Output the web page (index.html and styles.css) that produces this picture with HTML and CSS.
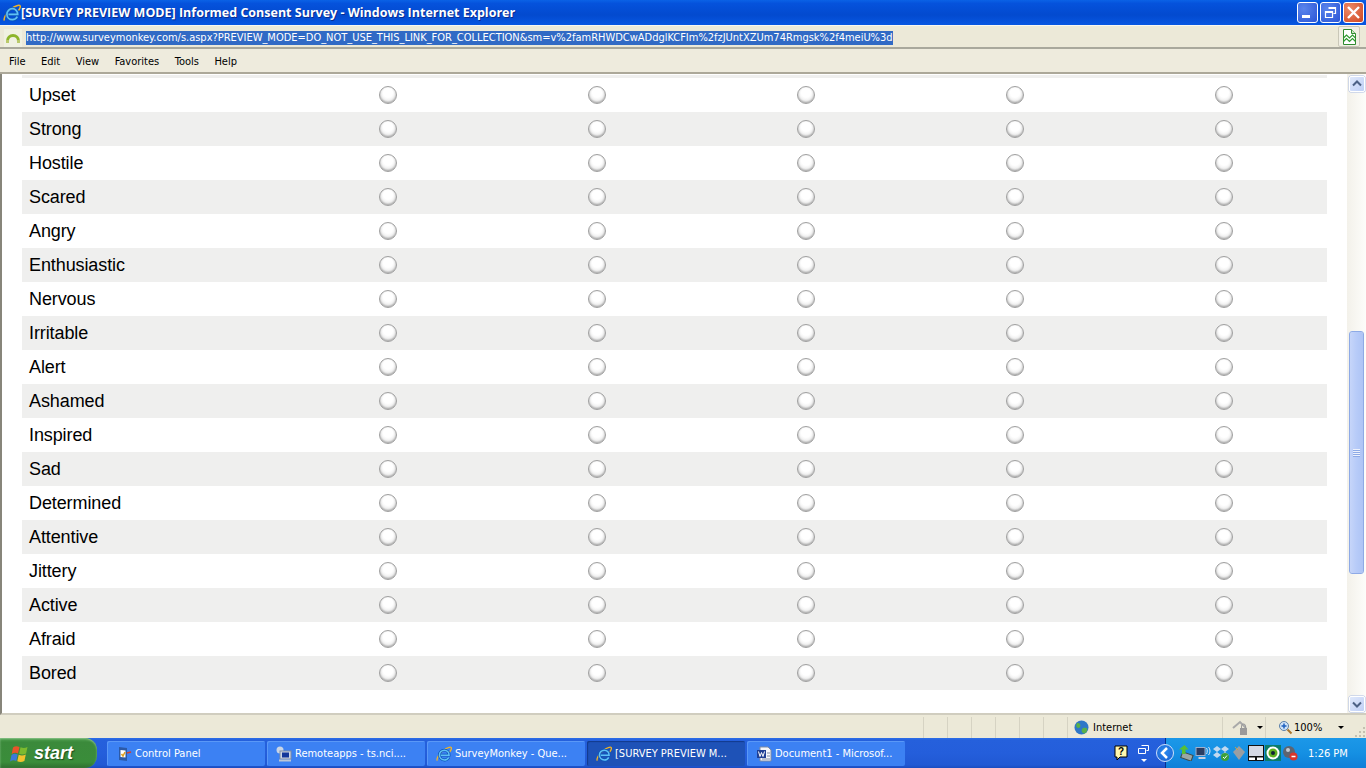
FILE: index.html
```html
<!DOCTYPE html>
<html lang="en">
<head>
<meta charset="utf-8">
<title>[SURVEY PREVIEW MODE] Informed Consent Survey - Windows Internet Explorer</title>
<link rel="stylesheet" href="styles.css">
</head>
<body>
<svg class="defs" width="0" height="0">
  <symbol id="ie" viewBox="0 0 18 18">
    <path d="M1.500 16.500C.2 14.500 3 9 8 5c4-3.200 8.500-4.500 9.200-3 .5 1.100-.6 3-1.700 4.500" fill="none" stroke="#f0b428" stroke-width="1.500"/>
    <path d="M5.500 10.300h9.200c0-3.200-2.400-5.600-5.300-5.600-3.100 0-5.500 2.400-5.500 5.500s2.400 5.500 5.500 5.500c2.300 0 4-1.200 4.900-3" fill="none" stroke="#0d56b8" stroke-width="3.200"/>
    <path d="M5.500 10.300h9.200c0-3.200-2.400-5.600-5.300-5.600-3.100 0-5.500 2.400-5.500 5.500s2.400 5.500 5.500 5.500c2.300 0 4-1.200 4.900-3" fill="none" stroke="#5fc0f6" stroke-width="1.700"/>
  </symbol>
</svg>
<div class="window">
  <header class="titlebar">
    <svg class="ie" width="18" height="18"><use href="#ie"/></svg>
    <span class="title-text">[SURVEY PREVIEW MODE] Informed Consent Survey - Windows Internet Explorer</span>
    <div class="winbtns">
      <span class="winbtn"><svg width="21" height="21" viewBox="0 0 21 21"><rect x="5" y="13" width="8" height="3" fill="#fff"/></svg></span>
      <span class="winbtn"><svg width="21" height="21" viewBox="0 0 21 21"><path d="M8.500 5.500h7v6h-2M5.500 9.500h7v6h-7z" fill="none" stroke="#fff" stroke-width="1.200"/><path d="M8.500 6.500h7M5.500 10.500h7" stroke="#fff"/></svg></span>
      <span class="winbtn close"><svg width="21" height="21" viewBox="0 0 21 21"><path d="M5 5l11 11M16 5L5 16" stroke="#fff" stroke-width="2.400"/></svg></span>
    </div>
  </header>
  <div class="addressbar">
    <span class="favicon"><svg width="16" height="16" viewBox="0 0 16 16"><path d="M2.500 11a5.500 5.500 0 0 1 11 0" fill="none" stroke="#8db52c" stroke-width="3"/><rect x="1" y="10" width="3" height="3" fill="#b9c96a"/><rect x="12" y="10" width="3" height="3" fill="#b9c96a"/></svg></span>
    <span class="url">http://www.surveymonkey.com/s.aspx?PREVIEW_MODE=DO_NOT_USE_THIS_LINK_FOR_COLLECTION&amp;sm=v%2famRHWDCwADdglKCFIm%2fzJUntXZUm74Rmgsk%2f4meiU%3d</span>
    <span class="compat"><svg width="15" height="16" viewBox="0 0 15 16"><path d="M1.500.5h8l4 4v11h-12z" fill="#fff" stroke="#2f8a2f"/><path d="M9.500.5v4h4" fill="#cfe8c8" stroke="#2f8a2f"/><path d="M1.500 9l3-3 3 3 3-3 3 3M1.500 12.500l3-3 3 3 3-3 3 3" fill="none" stroke="#2f9a2f" stroke-width="1.200"/></svg></span>
  </div>
  <nav class="menubar">
    <span>File</span><span>Edit</span><span>View</span><span>Favorites</span><span>Tools</span><span>Help</span>
  </nav>
  <main class="viewport">
    <div class="page">
      <div class="sliver"></div>
      <div class="matrix">
        <div class="row"><span class="label">Upset</span><i></i><i></i><i></i><i></i><i></i></div>
        <div class="row"><span class="label">Strong</span><i></i><i></i><i></i><i></i><i></i></div>
        <div class="row"><span class="label">Hostile</span><i></i><i></i><i></i><i></i><i></i></div>
        <div class="row"><span class="label">Scared</span><i></i><i></i><i></i><i></i><i></i></div>
        <div class="row"><span class="label">Angry</span><i></i><i></i><i></i><i></i><i></i></div>
        <div class="row"><span class="label">Enthusiastic</span><i></i><i></i><i></i><i></i><i></i></div>
        <div class="row"><span class="label">Nervous</span><i></i><i></i><i></i><i></i><i></i></div>
        <div class="row"><span class="label">Irritable</span><i></i><i></i><i></i><i></i><i></i></div>
        <div class="row"><span class="label">Alert</span><i></i><i></i><i></i><i></i><i></i></div>
        <div class="row"><span class="label">Ashamed</span><i></i><i></i><i></i><i></i><i></i></div>
        <div class="row"><span class="label">Inspired</span><i></i><i></i><i></i><i></i><i></i></div>
        <div class="row"><span class="label">Sad</span><i></i><i></i><i></i><i></i><i></i></div>
        <div class="row"><span class="label">Determined</span><i></i><i></i><i></i><i></i><i></i></div>
        <div class="row"><span class="label">Attentive</span><i></i><i></i><i></i><i></i><i></i></div>
        <div class="row"><span class="label">Jittery</span><i></i><i></i><i></i><i></i><i></i></div>
        <div class="row"><span class="label">Active</span><i></i><i></i><i></i><i></i><i></i></div>
        <div class="row"><span class="label">Afraid</span><i></i><i></i><i></i><i></i><i></i></div>
        <div class="row"><span class="label">Bored</span><i></i><i></i><i></i><i></i><i></i></div>
      </div>
    </div>
    <aside class="scrollbar">
      <span class="arrow"><svg width="16" height="16" viewBox="0 0 16 16"><path d="M4 9.500l4-4 4 4" fill="none" stroke="#4d6185" stroke-width="2"/></svg></span>
      <div class="track">
        <div class="thumb"><span class="grip"></span></div>
      </div>
      <span class="arrow"><svg width="16" height="16" viewBox="0 0 16 16"><path d="M4 6.500l4 4 4-4" fill="none" stroke="#4d6185" stroke-width="2"/></svg></span>
    </aside>
  </main>
  <footer class="statusbar">
    <span class="cell grow"></span>
    <span class="cell small"></span><span class="cell small"></span><span class="cell small"></span><span class="cell small"></span><span class="cell small"></span><span class="cell small"></span>
    <span class="cell zone"><svg width="15" height="15" viewBox="0 0 15 15"><circle cx="7.500" cy="7.500" r="7" fill="#2f77c8"/><path d="M3 3c3 0 4 2 3 4S3 8 2 6zM9 8c3-1 5 0 4 3s-4 3-5 1 0-3 1-4z" fill="#58b04a"/></svg><span>Internet</span></span>
    <span class="cell lock"><svg width="18" height="16" viewBox="0 0 18 16"><path d="M1 8l7-6 6 6" fill="none" stroke="#a9a9a9" stroke-width="2"/><rect x="8" y="8" width="7" height="7" fill="#9a9a9a"/><path d="M9.500 8V6a2 2 0 0 1 4 0v2" fill="none" stroke="#9a9a9a"/></svg><b class="caret"></b></span>
    <span class="cell zoom"><svg width="15" height="15" viewBox="0 0 15 15"><circle cx="6" cy="6" r="4.500" fill="#cfe3f7" stroke="#5b7fa8"/><path d="M3.500 6h5M6 3.500v5" stroke="#1d5fbf" stroke-width="1.500"/><path d="M9.500 9.500l4 4" stroke="#a8742c" stroke-width="2"/></svg><span>100%</span><b class="caret"></b></span>
    <span class="resize"><svg width="12" height="12" viewBox="0 0 12 12"><path d="M9 1h2v2H9zM5 5h2v2H5zM9 5h2v2H9zM1 9h2v2H1zM5 9h2v2H5zM9 9h2v2H9z" fill="#c4c1b1"/></svg></span>
  </footer>
  <div class="taskbar">
    <button class="start"><svg width="20" height="19" viewBox="0 0 20 19"><path d="M3 3.500c2-1.500 4-1.500 6.500-.5l-1.500 6.500C6 8.500 4 8.500 1.700 10z" fill="#e8542a"/><path d="M10.500 3.300c2.500 1 4.500 1 7-.3l-1.400 6.500c-2.500 1.200-4.500 1.200-7 .3z" fill="#7cba2f"/><path d="M1.500 11c2-1.400 4-1.500 6.200-.5l-1.400 6.500c-2-1-4-1-6.200.4z" fill="#3b79d8"/><path d="M8.700 10.800c2.400 1 4.500 1 7.100-.3l-1.400 6.500c-2.500 1.300-4.700 1.300-7.100.3z" fill="#f2c22e"/></svg><span>start</span></button>
    <div class="tasks">
      <span class="task"><svg width="16" height="16" viewBox="0 0 16 16"><path d="M3 1l8 1v13l-8-1z" fill="#2c5aa8"/><path d="M4.500 4l5 .5v7l-5-.5z" fill="#fff"/><path d="M5.500 8l1.500 2 2-4" fill="none" stroke="#e0a020" stroke-width="1.500"/><path d="M11 7l4-1" stroke="#d04030" stroke-width="1.500"/></svg><span>Control Panel</span></span>
      <span class="task"><svg width="16" height="16" viewBox="0 0 16 16"><circle cx="4" cy="4" r="3.500" fill="#c8d4e6"/><rect x="4" y="5" width="11" height="8" fill="#ccd6e6" stroke="#7e8ba3"/><rect x="6" y="6.500" width="7" height="5" fill="#14379a"/><rect x="3" y="13.500" width="12" height="2" fill="#bcc6d6"/></svg><span>Remoteapps - ts.nci....</span></span>
      <span class="task"><svg width="16" height="16"><use href="#ie"/></svg><span>SurveyMonkey - Que...</span></span>
      <span class="task active"><svg width="16" height="16"><use href="#ie"/></svg><span>[SURVEY PREVIEW M...</span></span>
      <span class="task"><svg width="16" height="16" viewBox="0 0 16 16"><path d="M4 1h8l3 3v11H4z" fill="#f4f6fb" stroke="#7e8ba3"/><rect x="1" y="4" width="9" height="8" fill="#1f3f94"/><path d="M2.500 5.500l1.500 5 1.500-4 1.500 4 1.500-5" fill="none" stroke="#fff"/><path d="M11 7h3M11 10h3M6 13h8" stroke="#7e8ba3"/></svg><span>Document1 - Microsof...</span></span>
    </div>
    <div class="quick">
      <svg class="help" width="16" height="16" viewBox="0 0 16 16"><path d="M2 1h12v11H7l-3 3v-3H2z" fill="#fff8b0" stroke="#000"/><text x="8" y="10" class="qmark">?</text></svg>
      <span class="updown"><svg width="11" height="9" viewBox="0 0 11 9"><path d="M3.500 .5h7v5h-2M.5 3.500h7v5h-7z" fill="none" stroke="#fff"/></svg><b class="downcaret"></b></span>
      <span class="chev"><svg width="14" height="14" viewBox="0 0 14 14"><path d="M9 2L4 7l5 5" fill="none" stroke="#fff" stroke-width="2.500"/></svg></span>
    </div>
    <div class="tray">
      <svg width="17" height="16" viewBox="0 0 16 16"><rect x="4" y="8" width="11" height="6" fill="#9aa6a6" stroke="#3d4a4a" transform="rotate(20 8 11)"/><path d="M7 0L1.500 4.500h3V9h3.500V4.500h3z" fill="#58c034"/></svg>
      <svg width="17" height="16" viewBox="0 0 16 16"><rect x=".5" y="2.500" width="9" height="8" fill="#2b3e63" stroke="#9fb0cc"/><rect x="3" y="12" width="7" height="2" fill="#c8d0e0"/><path d="M11 3c1 1 1 5 0 6M13 2c2 2 2 6 0 8" fill="none" stroke="#dbe5f5"/></svg>
      <svg width="17" height="16" viewBox="0 0 17 16"><path d="M4 1L0 4l4 3 4-3zM12 1L8 4l4 3 4-3zM4 7L0 10l4 3 4-3zM12 7l-4 3 4 3 4-3z" fill="#c2d9f0"/><circle cx="12" cy="12" r="4" fill="#3ba03b"/><path d="M10 12l1.500 1.500L14 10.500" fill="none" stroke="#fff"/></svg>
      <svg width="16" height="16" viewBox="0 0 16 16"><path d="M2 7l6-6 6 6-6 8z" fill="#9a9ea2"/><path d="M4 2l3 3" stroke="#c9a040"/></svg>
      <svg width="16" height="16" viewBox="0 0 16 16"><rect x=".5" y=".5" width="15" height="11" fill="#d5d9e4" stroke="#111"/><rect x=".5" y="12" width="7" height="3.500" fill="#fff" stroke="#111"/><rect x="8.500" y="12" width="7" height="3.500" fill="#fff" stroke="#111"/></svg>
      <svg width="16" height="16" viewBox="0 0 16 16"><rect width="16" height="16" fill="#0c7c68"/><circle cx="8" cy="8" r="6.500" fill="#fff"/><circle cx="8" cy="8" r="4.500" fill="#60b020"/><circle cx="8" cy="8" r="2" fill="#123"/></svg>
      <svg width="16" height="16" viewBox="0 0 16 16"><circle cx="7" cy="7" r="6" fill="#5d6470"/><circle cx="6" cy="5" r="2" fill="#c5cad2"/><circle cx="11.500" cy="11.500" r="4" fill="#d8352b"/><path d="M9.500 11.500h4" stroke="#fff" stroke-width="1.500"/></svg>
      <span class="clock">1:26 PM</span>
    </div>
  </div>
</div>
</body>
</html>
```

FILE: styles.css
```css
* { box-sizing: border-box; }
html, body { margin: 0; padding: 0; height: 768px; overflow: hidden; }
body { font-family: "Liberation Sans", Arial, sans-serif; color: #000; }
svg { display: block; flex: none; }
.defs { position: absolute; }

.window { width: 1366px; height: 768px; display: flex; flex-direction: column; background: #ece9d8; }

.titlebar { height: 25px; display: flex; align-items: center; padding: 0 2px 0 3px; background: linear-gradient(#0a62e6 0, #0552dc 14%, #034acf 60%, #0857e2 100%); color: #fff; }
.title-text { font: bold 12.500px "Open Sans", "DejaVu Sans", sans-serif; white-space: nowrap; flex: 1; text-shadow: 1px 1px 0 #0a2c90; }
.winbtns { display: flex; gap: 2px; }
.winbtn { width: 21px; height: 21px; border: 1px solid #fff; border-radius: 3px; background: radial-gradient(circle at 30% 30%, #5a85ec, #2a55d6); display: block; overflow: hidden; }
.winbtn svg { margin: -1px; }
.winbtn.close { background: radial-gradient(circle at 30% 30%, #ec8a68, #cf4620); }

.addressbar { height: 24px; display: flex; align-items: center; padding: 2px 0 0 4px; background: #ece9d8; border-bottom: 2px solid #a9a89c; border-top: 1px solid #f8f7f0; }
.favicon { width: 18px; height: 18px; background: #f0f1e2; display: flex; align-items: center; justify-content: center; margin-right: 4px; }
.url { font: 11px "DejaVu Sans", sans-serif; font-stretch: condensed; background: #316ac5; color: #fff; white-space: nowrap; line-height: 14px; letter-spacing: -.015px; }
.compat { margin-left: auto; width: 22px; height: 21px; margin-top: -2px; background: #f1efe4; border: 1px solid #c9c7b8; border-radius: 2px; display: flex; align-items: center; justify-content: center; margin-right: 6px; }

.menubar { height: 25px; display: flex; align-items: center; padding: 2px 0 0 9px; gap: 15.500px; background: #eeebdd; border-bottom: 2px solid #aca899; font: 11px "DejaVu Sans", sans-serif; font-stretch: condensed; }

.viewport { height: 641px; display: flex; background: #fff; border-left: 2px solid #87857a; border-bottom: 2px solid #d0cdbf; overflow: hidden; }
.page { width: 1345px; padding-left: 20px; }
.sliver { width: 1305px; height: 4px; background: linear-gradient(#fff 1px, #efefee 1px); }
.matrix { width: 1305px; }
.row { height: 34px; display: grid; grid-template-columns: 261px repeat(5, 209px); align-items: center; }
.row:nth-child(even) { background: #efefee; }
.label { padding-left: 7px; font-size: 18px; line-height: 20px; letter-spacing: -.1px; white-space: nowrap; }
.row i { display: block; width: 18px; height: 18px; margin-left: 96px; border-radius: 50%; border: 1px solid #a0a0a0; background: radial-gradient(circle at 50% 36%, #fff 35%, #f0f0f0 62%, #bcbcbc 100%); box-shadow: inset 0 -1px 2px #aaa; }

.scrollbar { width: 19px; display: flex; flex-direction: column; align-items: center; background: linear-gradient(90deg, #f3f1ea, #fdfdfa); padding: 2px 0 1px; }
.arrow { width: 16px; height: 16px; background: linear-gradient(135deg, #dfe8fb, #c0d0f6); border: 1px solid #fff; border-radius: 2px; box-shadow: 0 0 0 .5px #a9bbe4; flex: none; }
.arrow svg { margin: -1px; }
.track { flex: 1; width: 100%; padding-top: 239px; }
.thumb { width: 15px; height: 243px; margin-left: 2px; border: 1px solid #f4f6fb; outline: 1px solid #8eaae6; outline-offset: -1px; border-radius: 3px; background: linear-gradient(90deg, #c6d5f9, #b7cbf8 50%, #aec4f5); display: flex; align-items: center; justify-content: center; }
.grip { width: 7px; height: 8px; background: repeating-linear-gradient(#edf1fc 0 1px, #8eaae6 1px 2px); }

.statusbar { height: 23px; display: flex; align-items: stretch; background: #ece9d8; font: 11px "DejaVu Sans", sans-serif; font-stretch: condensed; padding-top: 2px; }
.cell { display: flex; align-items: center; border-right: 1px solid #d6d3c3; }
.cell.grow { flex: 1; }
.cell.small { width: 24px; }
.zone { width: 155px; padding-left: 6px; gap: 4px; }
.lock { width: 43px; padding-left: 9px; gap: 4px; }
.zoom { width: 85px; padding-left: 12px; gap: 1px; border-right: 0; }
.caret { width: 0; height: 0; border: 3px solid transparent; border-top: 3px solid #000; border-bottom: 0; margin-left: 3px; }
.zoom .caret { margin-left: 15px; }
.resize { width: 15px; display: flex; align-items: flex-end; justify-content: flex-end; }

.taskbar { height: 30px; display: flex; align-items: stretch; background: linear-gradient(#2c6ee8 0, #2560dc 8%, #245edb 50%, #2159d4 90%, #1b4cc0 100%); }
.start { width: 97px; height: 30px; border: 0; padding: 0 0 0 10px; display: flex; align-items: center; gap: 4px; background: linear-gradient(#4b9e4b 0, #3b8a3b 15%, #3a8d3a 80%, #2f6f2f 100%); border-radius: 0 12px 12px 0; color: #fff; box-shadow: inset 0 1px 2px #8cc48c; }
.start span { font: italic bold 18px "Liberation Sans", sans-serif; text-shadow: 1px 1px 1px #1d4d1d; }
.tasks { width: 812px; display: flex; padding: 3px 0 2px 10px; gap: 2px; }
.task { width: 158px; display: flex; align-items: center; gap: 3px; padding-left: 9px; background: #3c81f3; border-radius: 2px; color: #fff; font: 11px "DejaVu Sans", sans-serif; font-stretch: condensed; box-shadow: inset 1px 1px 0 #5a98f7; white-space: nowrap; }
.task.active { background: #1e52b7; box-shadow: inset 1px 1px 1px #123a8c; }
.quick { flex: 1; display: flex; align-items: center; justify-content: flex-end; gap: 7px; }
.help { margin-right: 2px; }
.qmark { font: bold 10px "Liberation Sans", sans-serif; text-anchor: middle; fill: #000; }
.updown { display: flex; flex-direction: column; align-items: center; gap: 5px; }
.downcaret { width: 0; height: 0; border: 3px solid transparent; border-top: 3px solid #fff; border-bottom: 0; }
.chev { width: 18px; height: 18px; border-radius: 50%; background: radial-gradient(circle at 50% 40%, #2a8bf0, #1b60d0); border: 1px solid #cfe0fa; display: flex; align-items: center; justify-content: center; margin-right: -9px; position: relative; z-index: 1; }
.tray { width: 201px; display: flex; align-items: center; gap: 1px; padding-left: 11px; background: linear-gradient(#1c98e8 0, #1590e3 50%, #0f7fd8 100%); border-left: 1px solid #092e8f; color: #fff; }
.clock { font: 11px "DejaVu Sans", sans-serif; font-stretch: condensed; margin-left: 9px; white-space: nowrap; }
```
